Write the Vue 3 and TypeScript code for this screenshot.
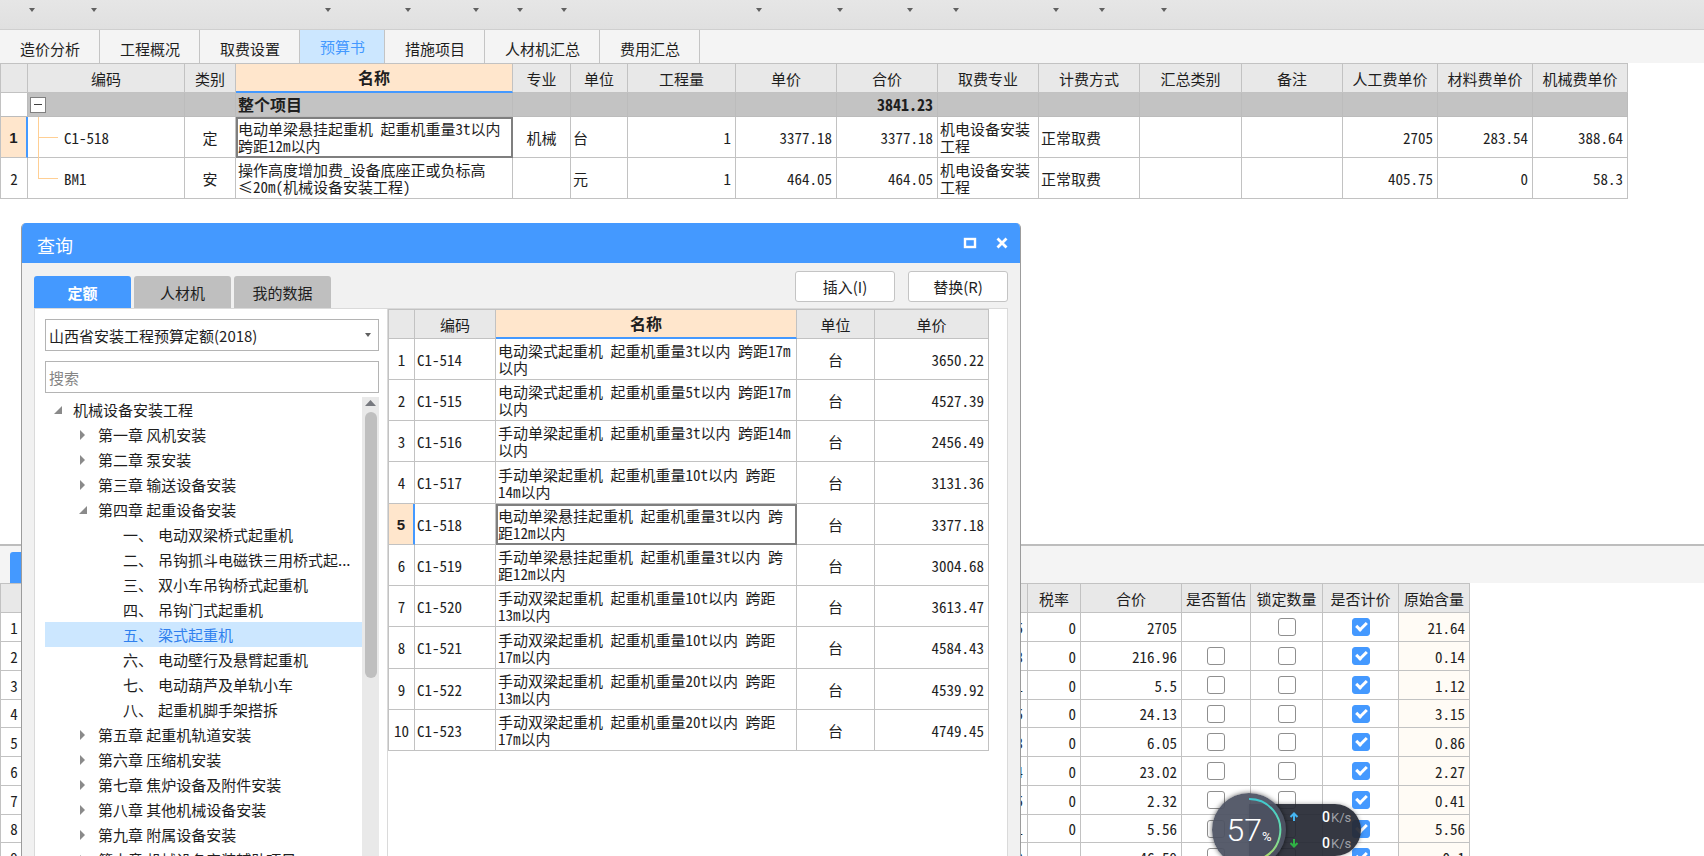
<script setup lang="ts">
import { ref } from 'vue'

interface BudgetRow {
  code: string
  kind: string
  name: string
  major: string
  unit: string
  qty: string
  price: string
  total: string
  feeMajor: string
  feeMode: string
  labor: string
  material: string
  machine: string
}
interface QuotaRow {
  code: string
  name: string
  price: string
}
interface TreeNode {
  level: number
  state: 'open' | 'closed' | 'leaf'
  text: string
  no?: string
}
interface ResourceRow {
  unitPrice: string
  tax: string
  total: string
  estimate: boolean | null
  locked: boolean
  priced: boolean
  content: string
}

const toolbarWidths: number[] = [38, 62, 234, 80, 68, 44, 44, 195, 81, 70, 46, 100, 46, 62]

const pageTabs = ['造价分析', '工程概况', '取费设置', '预算书', '措施项目', '人材机汇总', '费用汇总']
const activePage = ref('预算书')

const budgetHeads = ['', '编码', '类别', '名称', '专业', '单位', '工程量', '单价', '合价', '取费专业', '计费方式', '汇总类别', '备注', '人工费单价', '材料费单价', '机械费单价']
const budgetCols = [28, 157, 51, 277, 58, 57, 108, 101, 101, 101, 101, 102, 101, 95, 95, 95]
const budgetRows: BudgetRow[] = [
  { code: 'C1-518', kind: '定', name: '电动单梁悬挂起重机 起重机重量3t以内\n跨距12m以内', major: '机械', unit: '台', qty: '1', price: '3377.18', total: '3377.18', feeMajor: '机电设备安装\n工程', feeMode: '正常取费', labor: '2705', material: '283.54', machine: '388.64' },
  { code: 'BM1', kind: '安', name: '操作高度增加费_设备底座正或负标高\n≤20m(机械设备安装工程)', major: '', unit: '元', qty: '1', price: '464.05', total: '464.05', feeMajor: '机电设备安装\n工程', feeMode: '正常取费', labor: '405.75', material: '0', machine: '58.3' },
]

const dialogTabs = ['定额', '人材机', '我的数据']
const activeDialogTab = ref('定额')
const library = ref('山西省安装工程预算定额(2018)')
const keyword = ref('')

const tree: TreeNode[] = [
  { level: 0, state: 'open', text: '机械设备安装工程' },
  { level: 1, state: 'closed', text: '第一章 风机安装' },
  { level: 1, state: 'closed', text: '第二章 泵安装' },
  { level: 1, state: 'closed', text: '第三章 输送设备安装' },
  { level: 1, state: 'open', text: '第四章 起重设备安装' },
  { level: 2, state: 'leaf', no: '一、', text: '电动双梁桥式起重机' },
  { level: 2, state: 'leaf', no: '二、', text: '吊钩抓斗电磁铁三用桥式起...' },
  { level: 2, state: 'leaf', no: '三、', text: '双小车吊钩桥式起重机' },
  { level: 2, state: 'leaf', no: '四、', text: '吊钩门式起重机' },
  { level: 2, state: 'leaf', no: '五、', text: '梁式起重机' },
  { level: 2, state: 'leaf', no: '六、', text: '电动壁行及悬臂起重机' },
  { level: 2, state: 'leaf', no: '七、', text: '电动葫芦及单轨小车' },
  { level: 2, state: 'leaf', no: '八、', text: '起重机脚手架搭拆' },
  { level: 1, state: 'closed', text: '第五章 起重机轨道安装' },
  { level: 1, state: 'closed', text: '第六章 压缩机安装' },
  { level: 1, state: 'closed', text: '第七章 焦炉设备及附件安装' },
  { level: 1, state: 'closed', text: '第八章 其他机械设备安装' },
  { level: 1, state: 'closed', text: '第九章 附属设备安装' },
  { level: 1, state: 'closed', text: '第十章 机械设备安装辅助项目' },
]
const selectedNode = ref('梁式起重机')

const quotaCols = [27, 81, 301, 78, 114]
const quotaRows: QuotaRow[] = [
  { code: 'C1-514', name: '电动梁式起重机 起重机重量3t以内 跨距17m\n以内', price: '3650.22' },
  { code: 'C1-515', name: '电动梁式起重机 起重机重量5t以内 跨距17m\n以内', price: '4527.39' },
  { code: 'C1-516', name: '手动单梁起重机 起重机重量3t以内 跨距14m\n以内', price: '2456.49' },
  { code: 'C1-517', name: '手动单梁起重机 起重机重量10t以内 跨距\n14m以内', price: '3131.36' },
  { code: 'C1-518', name: '电动单梁悬挂起重机 起重机重量3t以内 跨\n距12m以内', price: '3377.18' },
  { code: 'C1-519', name: '手动单梁悬挂起重机 起重机重量3t以内 跨\n距12m以内', price: '3004.68' },
  { code: 'C1-520', name: '手动双梁起重机 起重机重量10t以内 跨距\n13m以内', price: '3613.47' },
  { code: 'C1-521', name: '手动双梁起重机 起重机重量10t以内 跨距\n17m以内', price: '4584.43' },
  { code: 'C1-522', name: '手动双梁起重机 起重机重量20t以内 跨距\n13m以内', price: '4539.92' },
  { code: 'C1-523', name: '手动双梁起重机 起重机重量20t以内 跨距\n17m以内', price: '4749.45' },
]
const selectedQuota = ref('C1-518')

const resourceCols = [28, 900, 100, 53, 101, 69, 72, 76, 71]
const resourceHeads = ['', '', '', '税率', '合价', '是否暂估', '锁定数量', '是否计价', '原始含量']
const resourceRows = ref<ResourceRow[]>([
  { unitPrice: '125', tax: '0', total: '2705', estimate: null, locked: false, priced: true, content: '21.64' },
  { unitPrice: '3', tax: '0', total: '216.96', estimate: false, locked: false, priced: true, content: '0.14' },
  { unitPrice: '1', tax: '0', total: '5.5', estimate: false, locked: false, priced: true, content: '1.12' },
  { unitPrice: '5', tax: '0', total: '24.13', estimate: false, locked: false, priced: true, content: '3.15' },
  { unitPrice: '3', tax: '0', total: '6.05', estimate: false, locked: false, priced: true, content: '0.86' },
  { unitPrice: '4', tax: '0', total: '23.02', estimate: false, locked: false, priced: true, content: '2.27' },
  { unitPrice: '5', tax: '0', total: '2.32', estimate: false, locked: false, priced: true, content: '0.41' },
  { unitPrice: '1', tax: '0', total: '5.56', estimate: false, locked: false, priced: true, content: '5.56' },
  { unitPrice: '9', tax: '', total: '46.59', estimate: false, locked: false, priced: true, content: '0.1' },
])
</script>

<template>
  <div class="app">
    <div class="toolbar">
      <button v-for="(w, i) in toolbarWidths" :key="i" class="tool" :style="{ width: w + 'px' }" :aria-label="'菜单 ' + (i + 1)">
        <i class="caret"></i>
      </button>
    </div>

    <nav class="page-tabs">
      <button v-for="t in pageTabs" :key="t" class="page-tab" :class="{ active: t === activePage }" @click="activePage = t">{{ t }}</button>
    </nav>

    <main class="upper">
      <table class="grid budget">
        <colgroup><col v-for="(w, i) in budgetCols" :key="i" :style="{ width: w + 'px' }" /></colgroup>
        <thead>
          <tr>
            <th v-for="(h, i) in budgetHeads" :key="i" :class="{ current: h === '名称' }">{{ h }}</th>
          </tr>
        </thead>
        <tbody>
          <tr class="group">
            <td class="blank"></td>
            <td class="toggle-cell">
              <button class="toggle" aria-label="折叠"></button>
            </td>
            <td></td>
            <td>整个项目</td>
            <td></td><td></td><td></td><td></td>
            <td class="num">3841.23</td>
            <td></td><td></td><td></td><td></td><td></td><td></td><td></td>
          </tr>
          <tr v-for="(r, i) in budgetRows" :key="r.code">
            <th class="index" :class="{ picked: i === 0 }">{{ i + 1 }}</th>
            <td class="code" :class="{ last: i === budgetRows.length - 1 }">{{ r.code }}</td>
            <td class="mid">{{ r.kind }}</td>
            <td class="name" :class="{ focused: i === 0 }">{{ r.name }}</td>
            <td class="mid">{{ r.major }}</td>
            <td>{{ r.unit }}</td>
            <td class="num">{{ r.qty }}</td>
            <td class="num">{{ r.price }}</td>
            <td class="num">{{ r.total }}</td>
            <td class="name">{{ r.feeMajor }}</td>
            <td>{{ r.feeMode }}</td>
            <td></td>
            <td></td>
            <td class="num">{{ r.labor }}</td>
            <td class="num">{{ r.material }}</td>
            <td class="num">{{ r.machine }}</td>
          </tr>
        </tbody>
      </table>
    </main>

    <section class="lower">
      <div class="lower-bar"><button class="lower-tab" aria-label="工料机显示"></button></div>
      <table class="grid resource">
        <colgroup><col v-for="(w, i) in resourceCols" :key="i" :style="{ width: w + 'px' }" /></colgroup>
        <thead>
          <tr><th v-for="(h, i) in resourceHeads" :key="i">{{ h }}</th></tr>
        </thead>
        <tbody>
          <tr v-for="(r, i) in resourceRows" :key="i">
            <th class="index">{{ i + 1 }}</th>
            <td></td>
            <td class="num">{{ r.unitPrice }}</td>
            <td class="num">{{ r.tax }}</td>
            <td class="num">{{ r.total }}</td>
            <td class="mid"><input v-if="r.estimate !== null" v-model="r.estimate" class="check" type="checkbox" aria-label="是否暂估" /></td>
            <td class="mid"><input v-model="r.locked" class="check" type="checkbox" aria-label="锁定数量" /></td>
            <td class="mid"><input v-model="r.priced" class="check" type="checkbox" aria-label="是否计价" /></td>
            <td class="num tinted">{{ r.content }}</td>
          </tr>
        </tbody>
      </table>
    </section>

    <div class="dialog" role="dialog" aria-labelledby="dialog-title">
      <header class="dialog-head">
        <h2 id="dialog-title">查询</h2>
        <button class="win" aria-label="最大化">
          <svg width="14" height="12" viewBox="0 0 14 12"><rect x="2" y="2" width="10" height="8" fill="none" stroke="#fff" stroke-width="2.4" /></svg>
        </button>
        <button class="win" aria-label="关闭">
          <svg width="14" height="12" viewBox="0 0 14 12"><path d="M2.5 1.5 L11.5 10.5 M11.5 1.5 L2.5 10.5" stroke="#fff" stroke-width="2.8" fill="none" /></svg>
        </button>
      </header>
      <div class="dialog-bar">
        <div class="dialog-tabs">
          <button v-for="t in dialogTabs" :key="t" class="dialog-tab" :class="{ active: t === activeDialogTab }" @click="activeDialogTab = t">{{ t }}</button>
        </div>
        <div class="actions">
          <button class="action">插入(I)</button>
          <button class="action">替换(R)</button>
        </div>
      </div>
      <div class="dialog-body">
        <aside class="side">
          <div class="select-wrap">
            <select v-model="library" class="field" aria-label="定额库">
              <option>山西省安装工程预算定额(2018)</option>
            </select>
            <i class="caret"></i>
          </div>
          <input v-model="keyword" class="field" type="text" placeholder="搜索" aria-label="搜索" />
          <div class="tree-box">
            <ul class="tree">
              <li v-for="n in tree" :key="n.text" class="node" :class="['level-' + n.level, { selected: n.text === selectedNode }]" @click="selectedNode = n.text">
                <svg v-if="n.state === 'open'" class="arrow" width="10" height="10" viewBox="0 0 10 10"><path d="M9 1 V9 H1 Z" fill="#8a8a8a" /></svg>
                <svg v-else-if="n.state === 'closed'" class="arrow" width="10" height="10" viewBox="0 0 10 10"><path d="M2 0 L7 5 L2 10 Z" fill="#8a8a8a" /></svg>
                <span v-if="n.no" class="no">{{ n.no }}</span>
                <span>{{ n.text }}</span>
              </li>
            </ul>
            <div class="scroll">
              <svg width="17" height="15" viewBox="0 0 17 15"><path d="M3 9 L8.5 3 L14 9 Z" fill="#77797f" /></svg>
              <div class="thumb"></div>
            </div>
          </div>
        </aside>
        <div class="results">
          <table class="grid quota">
            <colgroup><col v-for="(w, i) in quotaCols" :key="i" :style="{ width: w + 'px' }" /></colgroup>
            <thead>
              <tr><th></th><th>编码</th><th class="current">名称</th><th>单位</th><th>单价</th></tr>
            </thead>
            <tbody>
              <tr v-for="(q, i) in quotaRows" :key="q.code" @click="selectedQuota = q.code">
                <th class="index" :class="{ picked: q.code === selectedQuota }">{{ i + 1 }}</th>
                <td>{{ q.code }}</td>
                <td class="name" :class="{ focused: q.code === selectedQuota }">{{ q.name }}</td>
                <td class="mid">台</td>
                <td class="num">{{ q.price }}</td>
              </tr>
            </tbody>
          </table>
        </div>
      </div>
    </div>

    <div class="monitor">
      <div class="pill">
        <div class="rate">
          <svg width="10" height="10" viewBox="0 0 10 10"><path d="M5 9 V2 M1.5 5 L5 1.5 L8.5 5" stroke="#45b4f0" stroke-width="2" fill="none" /></svg>
          <span class="speed"><b>0</b>K/s</span>
        </div>
        <div class="rate">
          <svg width="10" height="10" viewBox="0 0 10 10"><path d="M5 1 V8 M1.5 5 L5 8.5 L8.5 5" stroke="#2fb344" stroke-width="2" fill="none" /></svg>
          <span class="speed"><b>0</b>K/s</span>
        </div>
      </div>
      <div class="gauge">
        <svg class="ring" width="74" height="74" viewBox="0 0 74 74">
          <defs>
            <linearGradient id="ring-color" x1="0" y1="0" x2="0" y2="1">
              <stop offset="0" stop-color="#3fc8d0" />
              <stop offset="0.5" stop-color="#62dcae" />
              <stop offset="1" stop-color="#b6dc62" />
            </linearGradient>
          </defs>
          <path d="M37 6 A31 31 0 1 1 24 65" fill="none" stroke="url(#ring-color)" stroke-width="2" />
        </svg>
        <span class="percent">57<small>%</small></span>
      </div>
    </div>
  </div>
</template>

<style>
body {
  overflow: hidden;
}
</style>

<style scoped>
.app {
  position: relative;
  display: flex;
  flex-direction: column;
  height: 100vh;
  overflow: hidden;
  background: #fff;
  color: #1e1e1e;
  font-family: "Noto Sans CJK SC", sans-serif;
  font-size: 15px;
}
button {
  margin: 0;
  padding: 0;
  border: 0;
  background: none;
  color: inherit;
  font: inherit;
}
.caret {
  display: block;
  width: 0;
  height: 0;
  border: 3px solid transparent;
  border-top: 4px solid #606060;
  border-bottom: 0;
}

.toolbar {
  display: flex;
  flex: none;
  height: 29px;
  border-bottom: 1px solid #cfcfcf;
  background: linear-gradient(#e6e6e6, #e0e0e0);
}
.tool {
  display: flex;
  flex: none;
  justify-content: flex-end;
  padding: 8px 3px 0 0;
  box-sizing: border-box;
}

.page-tabs {
  display: flex;
  flex: none;
  height: 33px;
  background: #f4f4f4;
}
.page-tab {
  padding: 3px 19px 0 20px;
  border-right: 1px solid #c4c4c4;
}
.page-tab.active {
  padding: 0 19px 0 20px;
  background: #cce7ff;
  color: #4499ff;
}

.grid {
  table-layout: fixed;
  width: 0;
  border-spacing: 0;
  border-top: 1px solid #c2c2c2;
  font-family: "Noto Sans Mono CJK SC", "Noto Sans CJK SC", monospace;
  line-height: 17px;
}
.grid th,
.grid td {
  box-sizing: border-box;
  padding: 0 4px 0 2px;
  border-right: 1px solid #c2c2c2;
  border-bottom: 1px solid #c2c2c2;
  text-align: left;
  white-space: pre;
}
.grid th {
  padding: 0;
  font-weight: 400;
  text-align: center;
}
.grid th:first-child,
.grid td:first-child {
  border-left: 1px solid #c2c2c2;
}
.grid thead th {
  height: 29px;
  background: #e8e8e8;
}
.grid thead th.current {
  border-bottom: 2px solid #4499ff;
  background: #ffe6cc;
  font-size: 16px;
  font-weight: 700;
}
.grid td.num {
  text-align: right;
}
.grid td.mid {
  padding: 0;
  text-align: center;
}
.grid th.picked {
  border-right: 2px solid #4499ff;
  background: #ffe6cc;
  font-family: "Liberation Sans", sans-serif;
  font-weight: 700;
}
.grid td.focused {
  outline: 2px solid #7f7f7f;
  outline-offset: -2px;
}
.budget tbody tr,
.quota tbody tr {
  height: 41px;
}
.quota tbody tr:nth-child(4n) {
  height: 42px;
}
.budget tbody tr.group {
  height: 24px;
  background: #c3c3c3;
  font-size: 16px;
  font-weight: 700;
}
.group td {
  border-color: #bcbcbc;
}
.group .blank {
  background: #fff;
}
.toggle-cell {
  position: relative;
}
.toggle {
  display: block;
  position: relative;
  width: 16px;
  height: 16px;
  box-sizing: border-box;
  border: 1px solid #808080;
  background: #fff;
}
.toggle::before {
  content: "";
  position: absolute;
  left: 3px;
  right: 3px;
  top: 6px;
  height: 1px;
  background: #404040;
}
.grid td.code {
  position: relative;
  padding-left: 36px;
}
.code::before {
  content: "";
  position: absolute;
  left: 10px;
  top: 0;
  bottom: -1px;
  border-left: 1px solid #ffcf94;
}
.code.last::before {
  bottom: 50%;
}
.code::after {
  content: "";
  position: absolute;
  left: 10px;
  top: 50%;
  width: 20px;
  border-top: 1px solid #ffcf94;
}

.upper {
  flex: 1;
  min-height: 0;
}
.lower {
  flex: none;
  height: 312px;
  overflow: hidden;
}
.lower-bar {
  display: flex;
  align-items: flex-end;
  height: 39px;
  box-sizing: border-box;
  padding-left: 10px;
  border-top: 2px solid #bdbdbd;
  background: #f4f4f4;
}
.lower-tab {
  width: 98px;
  height: 31px;
  border-radius: 3px 3px 0 0;
  background: #4499ff;
}
.resource tbody tr {
  height: 29px;
}
.resource tbody tr:nth-child(4n) {
  height: 28px;
}
.resource .tinted {
  background: #fffbf5;
}
.check {
  display: block;
  width: 18px;
  height: 18px;
  box-sizing: border-box;
  margin: 0 auto;
  border: 1px solid #8f8f8f;
  border-radius: 3px;
  appearance: none;
  background: #fff;
}
.check:checked {
  border-color: #4499ff;
  background: #4499ff;
}
.check:checked::before {
  content: "";
  display: block;
  width: 8px;
  height: 4px;
  margin: 3px 0 0 3px;
  border: solid #fff;
  border-width: 0 0 3px 3px;
  transform: rotate(-45deg);
}

.dialog {
  position: absolute;
  left: 21px;
  top: 223px;
  bottom: 0;
  display: flex;
  flex-direction: column;
  width: 1000px;
  box-sizing: border-box;
  overflow: hidden;
  border: solid #9c9c9c;
  border-width: 0 1px;
  border-radius: 5px 5px 0 0;
  background: #f1f1f1;
}
.dialog-head {
  display: flex;
  flex: none;
  align-items: center;
  gap: 18px;
  height: 40px;
  padding: 0 11px 0 15px;
  background: #4499ff;
  color: #fff;
}
.dialog-head h2 {
  flex: 1;
  margin: 4px 0 0;
  font-size: 18px;
  font-weight: 400;
  line-height: 24px;
}
.win,
.win svg {
  display: block;
}
.dialog-bar {
  display: flex;
  flex: none;
  align-items: flex-end;
  justify-content: space-between;
  height: 45px;
  padding: 0 12px;
}
.dialog-tabs {
  display: flex;
  gap: 3px;
}
.dialog-tab {
  width: 97px;
  height: 32px;
  border-radius: 3px 3px 0 0;
  background: #bfbfbf;
}
.dialog-tab.active {
  background: #4499ff;
  color: #fff;
  font-weight: 700;
}
.actions {
  display: flex;
  gap: 13px;
  padding-bottom: 6px;
}
.action {
  width: 100px;
  height: 31px;
  border: 1px solid #c4c4c4;
  border-radius: 3px;
  background: #fff;
}
.dialog-body {
  display: flex;
  flex: 1;
  min-height: 0;
  margin: 0 12px;
  border: 1px solid #dadada;
  border-bottom: 0;
  background: #fff;
}
.side {
  display: flex;
  flex-direction: column;
  flex: none;
  width: 352px;
  box-sizing: border-box;
  padding: 10px 8px 0 10px;
}
.select-wrap {
  position: relative;
  margin-bottom: 10px;
}
.select-wrap .caret {
  position: absolute;
  right: 8px;
  top: 14px;
}
.field {
  display: block;
  width: 100%;
  height: 32px;
  box-sizing: border-box;
  padding: 0 3px;
  border: 1px solid #b4b4b4;
  border-radius: 0;
  outline: 0;
  appearance: none;
  background: #fff;
  color: #1e1e1e;
  font: inherit;
}
.field::placeholder {
  color: #858585;
}
.tree-box {
  display: flex;
  flex: 1;
  min-height: 0;
  margin-top: 4px;
  overflow: hidden;
}
.tree {
  flex: 1;
  min-width: 0;
  margin: 0;
  padding: 0;
  list-style: none;
}
.node {
  display: flex;
  align-items: center;
  height: 25px;
  line-height: 25px;
  white-space: nowrap;
}
.node.selected {
  background: #cce7ff;
  color: #2f80ee;
}
.level-0 {
  padding-left: 8px;
}
.level-1 {
  padding-left: 33px;
}
.level-2 {
  padding-left: 78px;
}
.arrow {
  flex: none;
  margin-right: 10px;
}
.no {
  flex: none;
  width: 35px;
}
.scroll {
  flex: none;
  width: 17px;
  background: #e9e9e9;
}
.scroll svg {
  display: block;
}
.thumb {
  width: 12px;
  height: 266px;
  margin: 0 auto;
  border-radius: 6px;
  background: #bfbfbf;
}
.results {
  flex: 1;
  min-width: 0;
  border-left: 1px solid #dadada;
}

.monitor {
  position: absolute;
  left: 1212px;
  top: 793px;
  width: 149px;
  height: 74px;
}
.pill {
  position: absolute;
  left: 37px;
  right: 0;
  top: 11px;
  display: flex;
  flex-direction: column;
  height: 52px;
  box-sizing: border-box;
  padding-left: 40px;
  border-radius: 0 26px 26px 0;
  background: rgba(38, 41, 52, 0.93);
  box-shadow: 0 0 4px rgba(0, 0, 0, 0.35);
}
.rate {
  display: flex;
  align-items: center;
  height: 26px;
}
.speed {
  margin-left: 23px;
  color: #9fa1a8;
  font-family: Roboto, sans-serif;
  font-size: 13px;
}
.speed b {
  margin-right: 1px;
  color: #fff;
  font-size: 14px;
  font-weight: 500;
}
.gauge {
  position: absolute;
  left: 0;
  top: 0;
  display: flex;
  align-items: center;
  justify-content: center;
  width: 74px;
  height: 74px;
  border-radius: 50%;
  background: rgba(78, 83, 99, 0.94);
  box-shadow: 0 0 5px rgba(0, 0, 0, 0.6);
}
.ring {
  position: absolute;
  inset: 0;
}
.percent {
  color: #fff;
  font-family: Roboto, sans-serif;
  font-size: 32px;
  font-weight: 300;
}
.percent small {
  font-size: 13px;
  font-weight: 400;
}
</style>
